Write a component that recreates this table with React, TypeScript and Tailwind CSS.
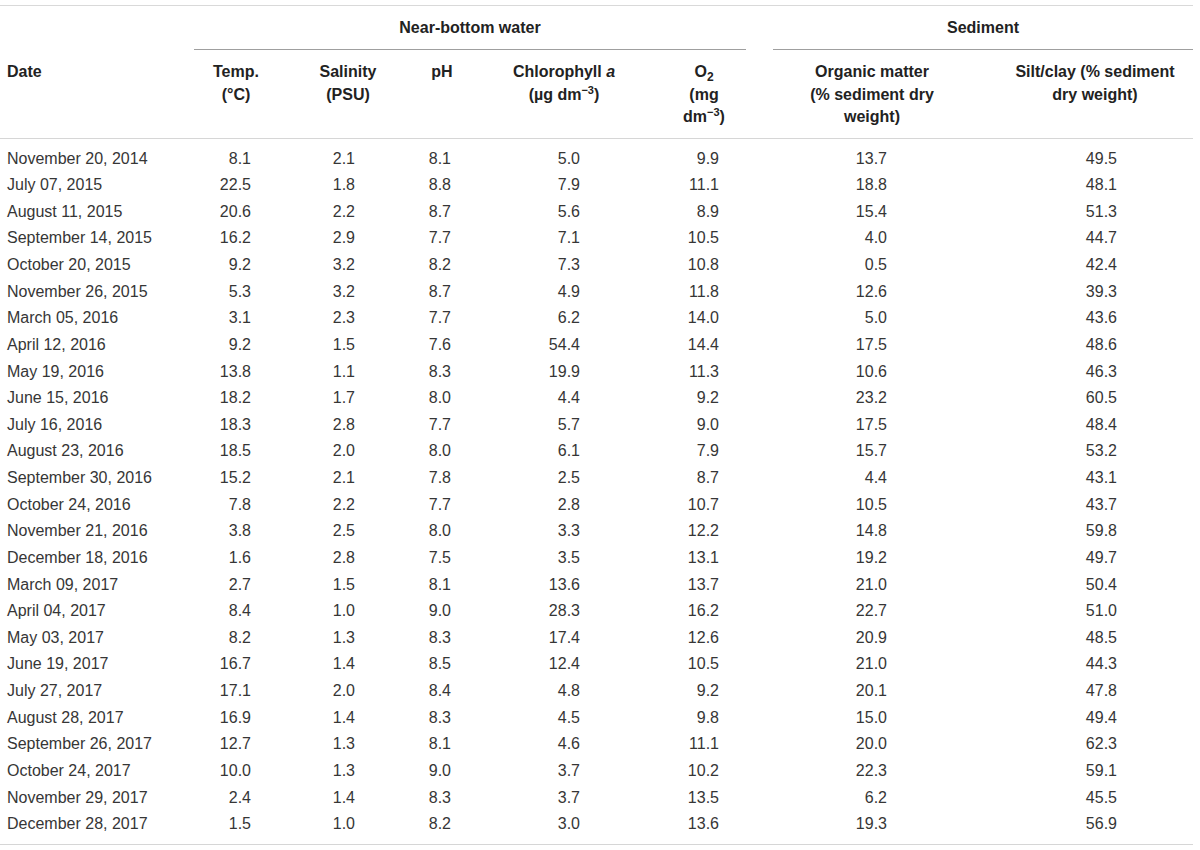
import React from "react";

const rows: string[][] = [
  ["November 20, 2014", "8.1", "2.1", "8.1", "5.0", "9.9", "13.7", "49.5"],
  ["July 07, 2015", "22.5", "1.8", "8.8", "7.9", "11.1", "18.8", "48.1"],
  ["August 11, 2015", "20.6", "2.2", "8.7", "5.6", "8.9", "15.4", "51.3"],
  ["September 14, 2015", "16.2", "2.9", "7.7", "7.1", "10.5", "4.0", "44.7"],
  ["October 20, 2015", "9.2", "3.2", "8.2", "7.3", "10.8", "0.5", "42.4"],
  ["November 26, 2015", "5.3", "3.2", "8.7", "4.9", "11.8", "12.6", "39.3"],
  ["March 05, 2016", "3.1", "2.3", "7.7", "6.2", "14.0", "5.0", "43.6"],
  ["April 12, 2016", "9.2", "1.5", "7.6", "54.4", "14.4", "17.5", "48.6"],
  ["May 19, 2016", "13.8", "1.1", "8.3", "19.9", "11.3", "10.6", "46.3"],
  ["June 15, 2016", "18.2", "1.7", "8.0", "4.4", "9.2", "23.2", "60.5"],
  ["July 16, 2016", "18.3", "2.8", "7.7", "5.7", "9.0", "17.5", "48.4"],
  ["August 23, 2016", "18.5", "2.0", "8.0", "6.1", "7.9", "15.7", "53.2"],
  ["September 30, 2016", "15.2", "2.1", "7.8", "2.5", "8.7", "4.4", "43.1"],
  ["October 24, 2016", "7.8", "2.2", "7.7", "2.8", "10.7", "10.5", "43.7"],
  ["November 21, 2016", "3.8", "2.5", "8.0", "3.3", "12.2", "14.8", "59.8"],
  ["December 18, 2016", "1.6", "2.8", "7.5", "3.5", "13.1", "19.2", "49.7"],
  ["March 09, 2017", "2.7", "1.5", "8.1", "13.6", "13.7", "21.0", "50.4"],
  ["April 04, 2017", "8.4", "1.0", "9.0", "28.3", "16.2", "22.7", "51.0"],
  ["May 03, 2017", "8.2", "1.3", "8.3", "17.4", "12.6", "20.9", "48.5"],
  ["June 19, 2017", "16.7", "1.4", "8.5", "12.4", "10.5", "21.0", "44.3"],
  ["July 27, 2017", "17.1", "2.0", "8.4", "4.8", "9.2", "20.1", "47.8"],
  ["August 28, 2017", "16.9", "1.4", "8.3", "4.5", "9.8", "15.0", "49.4"],
  ["September 26, 2017", "12.7", "1.3", "8.1", "4.6", "11.1", "20.0", "62.3"],
  ["October 24, 2017", "10.0", "1.3", "9.0", "3.7", "10.2", "22.3", "59.1"],
  ["November 29, 2017", "2.4", "1.4", "8.3", "3.7", "13.5", "6.2", "45.5"],
  ["December 28, 2017", "1.5", "1.0", "8.2", "3.0", "13.6", "19.3", "56.9"],
];

const grid =
  "grid grid-cols-[194px_84px_140px_48px_196px_84px_27px_198px_222px]";

function Sup({ children }: { children: React.ReactNode }) {
  return (
    <span className="relative -top-[6px] text-[11px] leading-none">{children}</span>
  );
}

export default function App() {
  return (
    <div
      className="w-[1200px] h-[850px] bg-white pt-[5px] text-[16px]"
      style={{ fontFamily: '"Liberation Sans", Arial, sans-serif' }}
    >
      <div className="w-[1193px] border-t border-[#d9d9d9]">
        {/* group header */}
        <div className={`${grid} h-[44px] font-bold text-[#222]`}>
          <div />
          <div className="col-span-5 flex items-center justify-center border-b border-[#9f9f9f]">
            Near-bottom water
          </div>
          <div />
          <div className="col-span-2 flex items-center justify-center border-b border-[#9f9f9f]">
            Sediment
          </div>
        </div>
        {/* column header */}
        <div
          className={`${grid} pt-[11px] pb-[9px] font-bold text-[#222] leading-[22.5px] border-b border-[#d6d6d6]`}
        >
          <div className="pl-[7px]">Date</div>
          <div className="text-center">
            Temp.
            <br />
            (°C)
          </div>
          <div className="text-center">
            Salinity
            <br />
            (PSU)
          </div>
          <div className="text-center">pH</div>
          <div className="text-center">
            Chlorophyll <i>a</i>
            <br />
            (µg dm<Sup>−3</Sup>)
          </div>
          <div className="text-center">
            O<span className="relative top-[4px] text-[12px] leading-none">2</span>
            <br />
            (mg
            <br />
            dm<Sup>−3</Sup>)
          </div>
          <div />
          <div className="text-center">
            Organic matter
            <br />
            (% sediment dry
            <br />
            weight)
          </div>
          <div className="text-center pl-[26px]">
            Silt/clay (% sediment
            <br />
            dry weight)
          </div>
        </div>
        {/* body */}
        <div className="py-[6.7px] border-b border-[#d6d6d6] text-[#363636]">
          {rows.map((r) => (
            <div key={r[0]} className={`${grid} h-[26.64px] items-center leading-none`}>
              <div className="pl-[7px]">{r[0]}</div>
              <div className="text-right pr-[27px]">{r[1]}</div>
              <div className="text-right pr-[63px]">{r[2]}</div>
              <div className="text-right pr-[15px]">{r[3]}</div>
              <div className="text-right pr-[82px]">{r[4]}</div>
              <div className="text-right pr-[27px]">{r[5]}</div>
              <div />
              <div className="text-right pr-[84px]">{r[6]}</div>
              <div className="text-right pr-[76px]">{r[7]}</div>
            </div>
          ))}
        </div>
      </div>
    </div>
  );
}
